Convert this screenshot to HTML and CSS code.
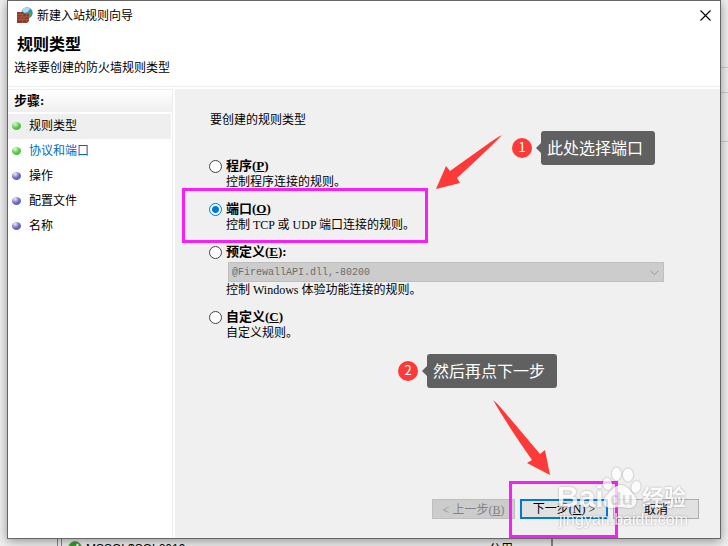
FILE: index.html
```
<!DOCTYPE html>
<html lang="zh-CN">
<head>
    <meta charset="UTF-8">
    <meta name="viewport" content="width=device-width, initial-scale=1.0">
    <title>新建入站规则向导</title>
    <link rel="stylesheet" href="styles.css">
</head>
<body>
    <div class="dialog">
        <div class="titlebar">
            <svg class="app-icon" width="16" height="16" viewBox="0 0 16 16">
                <circle cx="10" cy="6" r="5.700" fill="#2f86cf"/>
                <path d="M6 2C8 0 12 0 13 2L11 5L7 6L5 4Z" fill="#a9dcf7"/>
                <path d="M11 4C13 3 15 5 15 7C14 10 12 11 11 10L12 7Z" fill="#3fae3a"/>
                <path d="M0 5H6L8 7H12V14L10 16H0Z" fill="#8f3b2a"/>
                <path d="M0 7.500H7M0 10H12M0 12.500H12M3.500 5V7.500M5.500 7.500V10M3.500 10V12.500M7 10V12.500M5.500 12.500V16M9.500 7V10M9.500 12.500V15" stroke="#b07060" stroke-width=".5"/>
            </svg>
            <span class="title">新建入站规则向导</span>
            <button class="close" aria-label="关闭">
                <svg width="11" height="11" viewBox="0 0 11 11"><path d="M.5 .5L10.500 10.500M10.500 .5L.5 10.500" stroke="#000" stroke-width="1.100"/></svg>
            </button>
        </div>

        <header class="header">
            <h1>规则类型</h1>
            <p>选择要创建的防火墙规则类型</p>
        </header>

        <div class="main">
            <nav class="sidebar">
                <h2>步骤:</h2>
                <ul>
                    <li class="step done current">规则类型</li>
                    <li class="step done"><a href="#">协议和端口</a></li>
                    <li class="step">操作</li>
                    <li class="step">配置文件</li>
                    <li class="step">名称</li>
                </ul>
            </nav>

            <form class="content">
                <p class="intro">要创建的规则类型</p>

                <div class="options">
                    <div class="option">
                        <input type="radio" name="type" id="program">
                        <label for="program">程序(<u>P</u>)</label>
                        <p>控制程序连接的规则。</p>
                    </div>
                    <div class="option">
                        <input type="radio" name="type" id="port" checked>
                        <label for="port">端口(<u>O</u>)</label>
                        <p>控制 TCP 或 UDP 端口连接的规则。</p>
                    </div>
                    <div class="option">
                        <input type="radio" name="type" id="predefined">
                        <label for="predefined">预定义(<u>E</u>):</label>
                        <div class="select-wrap">
                            <select disabled aria-label="预定义">
                                <option>@FirewallAPI.dll,-80200</option>
                            </select>
                            <svg class="chevron" width="9" height="6" viewBox="0 0 9 6"><path d="M.5 .7L4.500 4.700L8.500 .7" fill="none" stroke="#9a9a9a"/></svg>
                        </div>
                        <p>控制 Windows 体验功能连接的规则。</p>
                    </div>
                    <div class="option">
                        <input type="radio" name="type" id="custom">
                        <label for="custom">自定义(<u>C</u>)</label>
                        <p>自定义规则。</p>
                    </div>
                </div>

                <div class="buttons">
                    <button type="button" class="btn back" disabled>&lt; 上一步(<u>B</u>)</button>
                    <button type="button" class="btn next">下一步(<u>N</u>) &gt;</button>
                    <button type="button" class="btn">取消</button>
                </div>
            </form>
        </div>
    </div>

    <!-- window behind the dialog -->
    <div class="backdrop">
        <div class="backdrop-tree"></div>
        <div class="backdrop-list">
            <svg width="14" height="14" viewBox="0 0 14 14"><circle cx="7" cy="7" r="6.500" fill="#2fa31f" stroke="#8a8a8a"/><path d="M4 7L6.500 9.500L10 3" fill="none" stroke="#fff" stroke-width="2"/></svg>
            <span class="rule-name">MSSQL$SQL2019</span>
            <span class="rule-profile">公用</span>
        </div>
        <div class="backdrop-actions"></div>
    </div>

    <!-- annotations -->
    <div class="mark mark-port"></div>
    <div class="mark mark-next"></div>

    <svg class="arrow arrow-port" width="68" height="56" viewBox="0 0 68 56">
        <path d="M67 0Q61 3 50 11L15 36L11 31L1 54L25 48L22 43Q58 10 67 0Z" fill="#fd3a38"/>
    </svg>
    <svg class="arrow arrow-next" width="60" height="76" viewBox="0 0 60 76">
        <path d="M1 0Q5 3 10 9L48 54L53 50L58 75L35 63L40 60Q16 26 1 0Z" fill="#fd3a38"/>
    </svg>

    <div class="note note-port"><span class="num">1</span><span class="tip">此处选择端口</span></div>
    <div class="note note-next"><span class="num">2</span><span class="tip">然后再点下一步</span></div>

    <svg class="watermark" width="140" height="72" viewBox="0 0 140 72">
        <g class="wm-shape">
            <ellipse cx="58.500" cy="17" rx="4.500" ry="6.500"/>
            <ellipse cx="70" cy="18" rx="5" ry="6.500"/>
            <ellipse cx="49.500" cy="27" rx="4.500" ry="6" transform="rotate(-15 49.500 27)"/>
            <ellipse cx="78" cy="30" rx="4.500" ry="6" transform="rotate(15 78 30)"/>
            <path d="M62 28C69 27 72 34 76 38C81 44 78 51 71 51C67 51 66 50 62 50C58 50 57 51 53 51C46 51 43 45 48 39C53 34 56 29 62 28Z"/>
        </g>
        <text class="wm-logo" x="-1" y="50">Bai</text>
        <text class="wm-du" x="52" y="48">du</text>
        <text class="wm-cn" x="84" y="48">经验</text>
        <text class="wm-url" x="1" y="68">jingyan.baidu.com</text>
    </svg>
</body>
</html>
```

FILE: styles.css
```
* {
    box-sizing: border-box;
}
body, h1, h2, p, ul {
    margin: 0;
    padding: 0;
}
body {
    height: 100vh;
    display: flex;
    flex-direction: column;
    position: relative;
    overflow: hidden;
    background: linear-gradient(transparent 67px, #ccc 67px, #ccc 68px, transparent 68px, transparent 92px, #ccc 92px, #ccc 93px, transparent 93px, transparent 141px, #ccc 141px, #ccc 142px, transparent 142px) right / 10px 100% no-repeat #f0f0f0;
    font-family: "Liberation Serif", "Noto Sans CJK SC", serif;
    font-size: 12px;
    line-height: 16px;
    color: #000;
}

/* Dialog window */
.dialog {
    flex: 1;
    margin: 0 7px;
    display: flex;
    flex-direction: column;
    position: relative;
    background: #fff;
    border: 1px solid #666;
    box-shadow: 0 2px 10px rgba(0, 0, 0, 0.4);
}
.titlebar {
    display: flex;
    align-items: center;
    gap: 4px;
    height: 28px;
    padding: 0 9px;
}
.title {
    flex: 1;
    font-family: "Noto Sans CJK SC", sans-serif;
}
.close {
    display: flex;
    padding: 0;
    border: none;
    background: none;
}
.header {
    height: 58px;
    padding: 5px 6px;
    border-bottom: 1px solid #eee;
}
.header h1 {
    padding: 0 3px;
    font-size: 16px;
    line-height: 22px;
}
.header p {
    padding-top: 4px;
}
.main {
    flex: 1;
    display: flex;
    gap: 2px;
    padding-top: 2px;
}

/* Steps */
.sidebar {
    width: 165px;
    border-right: 1px solid #eee;
}
.sidebar h2 {
    height: 23px;
    padding: 0 6px;
    font-size: 13px;
    line-height: 22px;
    background: linear-gradient(#fff, #efefef);
    border-top: 1px solid #eee;
}
.sidebar ul {
    list-style: none;
    padding: 2px 1px 0 0;
}
.step {
    display: flex;
    align-items: center;
    gap: 8px;
    height: 25px;
    padding: 0 4px 1px;
}
.step::before {
    content: "";
    width: 9px;
    height: 8px;
    border-radius: 50%;
    background: radial-gradient(circle at 35% 25%, #eee, #6c66cc 50%, #5a55b4);
}
.step.done::before {
    background: radial-gradient(circle at 35% 25%, #eee, #4fce3a 50%, #3bad2c);
}
.step.current {
    background: #efefef;
}
.step a {
    color: #0066cc;
    text-decoration: none;
}

/* Options */
.content {
    flex: 1;
    display: flex;
    flex-direction: column;
    padding: 23px 21px 19px 34px;
    background: #f0f0f0;
}
.intro {
    padding-left: 1px;
}
.options {
    flex: 1;
    display: flex;
    flex-direction: column;
    gap: 11px;
    padding: 30px 35px 0 0;
}
.option {
    display: grid;
    grid-template-columns: 13px 1fr;
    column-gap: 4px;
    align-items: center;
}
.option label {
    font-size: 13px;
    font-weight: bold;
}
.option p {
    grid-column: 2;
}
.option input {
    appearance: none;
    width: 13px;
    height: 13px;
    margin: 0;
    border: 1px solid #444;
    border-radius: 50%;
    background: #fff;
}
.option input:checked {
    border-color: #0078d7;
    background: radial-gradient(circle, #0078d7 3px, #fff 4px);
}
.select-wrap {
    grid-column: 2;
    position: relative;
    display: flex;
    padding: 2px 0 0 2px;
}
select {
    appearance: none;
    width: 100%;
    height: 20px;
    padding: 0 3px;
    border: 1px solid #bfbfbf;
    border-radius: 0;
    background: #ccc;
    color: #6d6d6d;
    font-family: "Liberation Mono", monospace;
    font-size: 10px;
    opacity: 1;
}
.chevron {
    position: absolute;
    right: 5px;
    top: 10px;
}

/* Buttons */
.buttons {
    display: flex;
    justify-content: flex-end;
    gap: 5px;
}
.btn {
    width: 86px;
    height: 20px;
    padding: 2px 0 0;
    border: 1px solid #adadad;
    background: #e1e1e1;
    color: #000;
    font: inherit;
    line-height: 16px;
    white-space: nowrap;
}
.btn.back {
    width: 83px;
    border-color: #bfbfbf;
    background: #ccc;
    color: #838383;
}
.btn.next {
    width: 88px;
    padding: 0;
    border: 2px solid #0078d7;
}

/* Window behind */
.backdrop {
    display: flex;
    height: 7px;
    padding: 0 0 0 57px;
    overflow: hidden;
}
.backdrop-tree {
    width: 5px;
    border: 1px solid #888;
    border-width: 0 1px;
}
.backdrop-list {
    flex: 1;
    display: flex;
    gap: 4px;
    padding: 2px 38px 0 6px;
    font-family: "Liberation Sans", "Noto Sans CJK SC", sans-serif;
}
.rule-name {
    flex: 1;
}
.backdrop-actions {
    width: 177px;
    border-left: 2px solid #888;
    background: #eee;
}

/* Annotations */
.mark {
    position: absolute;
    border: 3px solid #f81ef8;
}
.mark-port {
    left: 182px;
    top: 188px;
    width: 246px;
    height: 55px;
}
.mark-next {
    left: 509px;
    top: 481px;
    width: 109px;
    height: 57px;
}
.arrow {
    position: absolute;
}
.arrow-port {
    left: 435px;
    top: 135px;
}
.arrow-next {
    left: 492px;
    top: 400px;
}
.note {
    position: absolute;
    display: flex;
    align-items: center;
    gap: 9px;
    font-family: "Noto Sans CJK SC", sans-serif;
    color: #fff;
}
.note-port {
    left: 512px;
    top: 131px;
}
.note-next {
    left: 398px;
    top: 354px;
}
.num {
    width: 20px;
    height: 20px;
    border-radius: 50%;
    background: #fd3a38;
    font-size: 13px;
    line-height: 18px;
    text-align: center;
}
.tip {
    position: relative;
    padding: 0 12px 2px 6px;
    border-radius: 3px;
    background: #606060;
    font-size: 16px;
    line-height: 32px;
}
.tip::before {
    content: "";
    position: absolute;
    left: -5px;
    top: 12px;
    border: 5px solid transparent;
    border-left: none;
    border-right-color: #606060;
}

/* Watermark */
.watermark {
    position: absolute;
    left: 558px;
    top: 457px;
    fill: #fff;
    opacity: 0.75;
    filter: drop-shadow(0 0 1px rgba(0, 0, 0, 0.4));
    font-family: "Liberation Sans", "Noto Sans CJK SC", sans-serif;
    pointer-events: none;
}
.wm-logo {
    font-size: 30px;
    font-weight: bold;
}
.wm-du {
    font-size: 19px;
    font-weight: bold;
    fill: #d4d4d4;
}
.wm-cn {
    font-size: 22px;
    font-weight: bold;
}
.wm-url {
    font-size: 16px;
}
```
